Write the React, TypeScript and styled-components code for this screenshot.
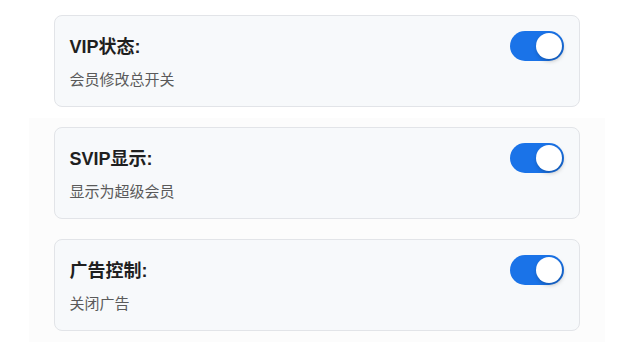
import * as React from 'react'
import styled, { createGlobalStyle } from 'styled-components'

const GlobalStyle = createGlobalStyle`
  html, body {
    margin: 0;
    padding: 0;
    background: #fff;
  }
  body {
    font-family: "Liberation Sans", "Noto Sans CJK SC", sans-serif;
  }
`

const Wrapper = styled.div`
  width: 576px;
  min-height: 342px;
  margin: 0 auto;
  padding: 15px 25px;
  box-sizing: border-box;
  display: flex;
  flex-direction: column;
  gap: 20px;
  background: linear-gradient(#fff 0, #fff 118px, #fcfcfc 118px);
`

const Card = styled.div`
  display: flex;
  flex-direction: column;
  padding: 15px;
  border: 1px solid #e2e4e8;
  border-radius: 8px;
  background-color: #f7f9fb;
`

const Header = styled.div`
  display: flex;
  align-items: center;
  justify-content: space-between;
  height: 30px;
`

const Title = styled.span`
  font-size: 18px;
  font-weight: bold;
  color: #1f1f1f;
  line-height: 30px;
  padding-top: 1px;
`

const Desc = styled.span`
  margin-top: 8px;
  font-size: 15px;
  line-height: 22px;
  color: #5a5a5a;
`

const Switch = styled.button<{ $on: boolean }>`
  position: relative;
  width: 54px;
  height: 30px;
  padding: 0;
  border: none;
  border-radius: 15px;
  cursor: pointer;
  background-color: ${props => (props.$on ? '#1a73e8' : '#ccc')};
  transition: .2s ease-out;
`

const Knob = styled.span<{ $on: boolean }>`
  position: absolute;
  top: 2px;
  left: ${props => (props.$on ? '26px' : '2px')};
  width: 26px;
  height: 26px;
  border-radius: 50%;
  background-color: #fff;
  box-shadow: 1px 2px 4px rgba(0, 0, 0, .25);
  transition: .2s ease-out;
`

type Option = {
  id: string,
  title: string,
  desc: string,
}

const options: Option[] = [
  { id: 'vip', title: 'VIP状态:', desc: '会员修改总开关' },
  { id: 'svip', title: 'SVIP显示:', desc: '显示为超级会员' },
  { id: 'ad', title: '广告控制:', desc: '关闭广告' },
]

const App = () => {
  const [state, setState] = React.useState<Record<string, boolean>>({
    vip: true,
    svip: true,
    ad: true,
  })

  const toggle = (id: string) => {
    setState(prev => ({ ...prev, [id]: !prev[id] }))
  }

  return (
    <>
      <GlobalStyle />
      <Wrapper>
        {options.map(opt => (
          <Card key={opt.id}>
            <Header>
              <Title>{opt.title}</Title>
              <Switch $on={state[opt.id]} onClick={() => toggle(opt.id)}>
                <Knob $on={state[opt.id]} />
              </Switch>
            </Header>
            <Desc>{opt.desc}</Desc>
          </Card>
        ))}
      </Wrapper>
    </>
  )
}

export default App
